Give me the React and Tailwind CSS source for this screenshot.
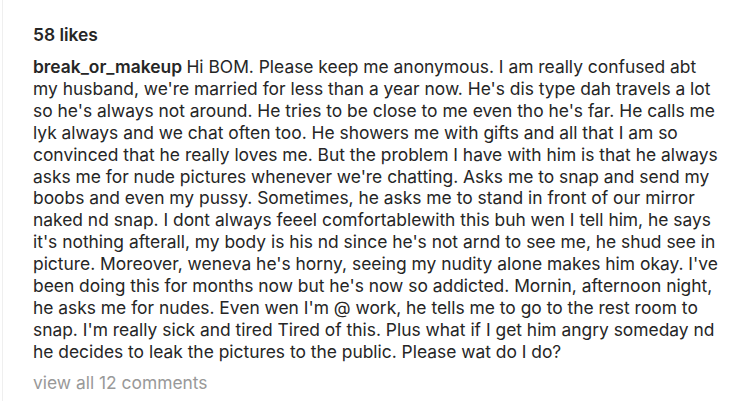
const lines = [
  "Hi BOM. Please keep me anonymous. I am really confused abt",
  "my husband, we're married for less than a year now. He's dis type dah travels a lot",
  "so he's always not around. He tries to be close to me even tho he's far. He calls me",
  "lyk always and we chat often too. He showers me with gifts and all that I am so",
  "convinced that he really loves me. But the problem I have with him is that he always",
  "asks me for nude pictures whenever we're chatting. Asks me to snap and send my",
  "boobs and even my pussy. Sometimes, he asks me to stand in front of our mirror",
  "naked nd snap. I dont always feeel comfortablewith this buh wen I tell him, he says",
  "it's nothing afterall, my body is his nd since he's not arnd to see me, he shud see in",
  "picture. Moreover, weneva he's horny, seeing my nudity alone makes him okay. I've",
  "been doing this for months now but he's now so addicted. Mornin, afternoon night,",
  "he asks me for nudes. Even wen I'm @ work, he tells me to go to the rest room to",
  "snap. I'm really sick and tired Tired of this. Plus what if I get him angry someday nd",
  "he decides to leak the pictures to the public. Please wat do I do?",
];

export default function App() {
  return (
    <div className="min-h-[401px] w-[754px] bg-white pl-[2px]">
      <div className="min-h-[401px] border-l border-[#efefef] pl-[30px] pt-[24px] font-['Inter',sans-serif] text-[17.4px] text-[#262626]">
        <div className="font-semibold leading-[22px]">58 likes</div>
        <div className="mt-[10px] leading-[21.9px]">
          {lines.map((l, i) => (
            <div key={i} className="whitespace-nowrap">
              {i === 0 && <span className="font-semibold">break_or_makeup </span>}
              {l}
            </div>
          ))}
        </div>
        <div className="mt-[9px] leading-[22px] text-[#999999]">view all 12 comments</div>
      </div>
    </div>
  );
}
